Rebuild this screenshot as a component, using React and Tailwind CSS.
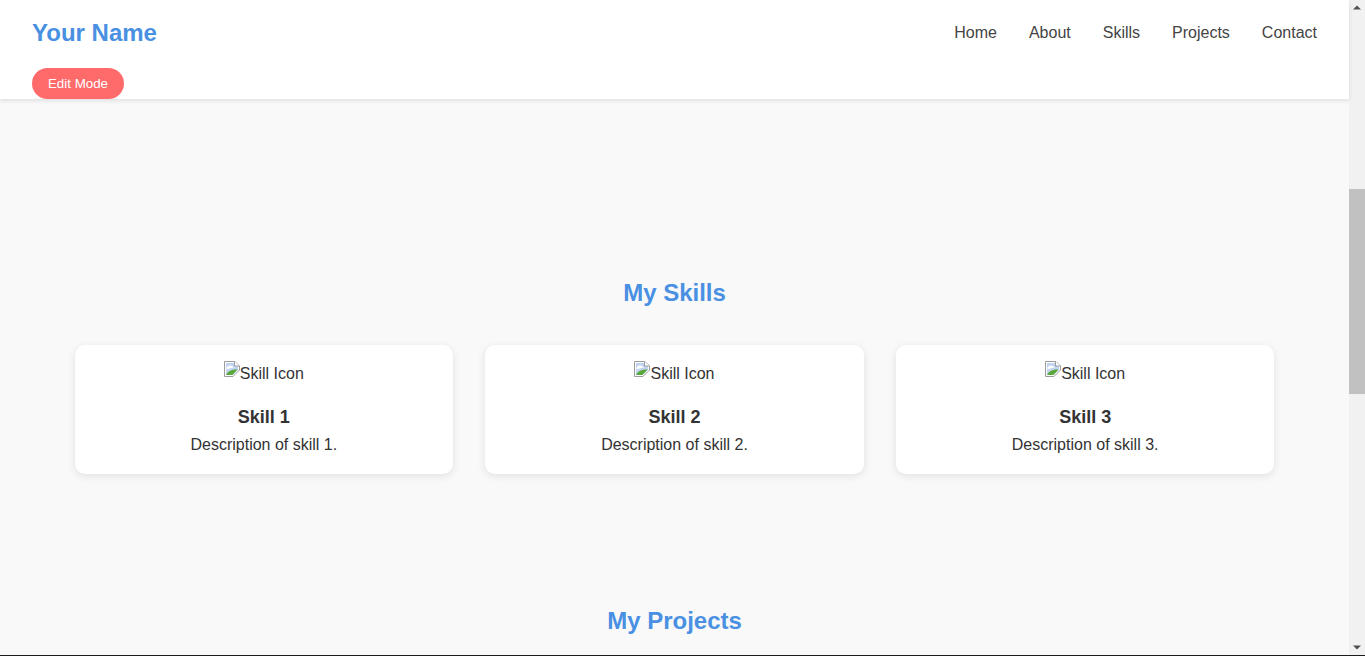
import React from "react";

const FONT = { fontFamily: '"Liberation Sans", Arial, sans-serif' };
const LINKS = ["Home", "About", "Skills", "Projects", "Contact"];
const SKILLS = [1, 2, 3];

function BrokenImage() {
  return (
    <svg width="16" height="16" viewBox="0 0 16 16" className="inline-block align-top">
      <path d="M0.5 0.5H11L15.5 5V9L9 15.5H0.5Z" fill="#fff" stroke="#9c9c9c" />
      <path d="M2 2H10.5L14 5.5V9L8.5 14H2Z" fill="#c0d3f0" />
      <path d="M2.5 6.5C4 4 7 3.5 10 6.5C7.5 7 5 7.5 2.5 8.5Z" fill="#fff" />
      <path d="M2 14C3.5 10.5 7.5 8 13.5 8.5L8.5 14Z" fill="#5aa83c" />
      <path d="M10.5 0.5V5H15.5" fill="#fff" stroke="#9c9c9c" />
    </svg>
  );
}

function SkillCard({ n }) {
  return (
    <div className="bg-white rounded-[10px] p-4 text-center shadow-[0_2px_8px_rgba(0,0,0,0.1)] text-[#333]">
      <div className="h-[37px] leading-[25px] text-base">
        <BrokenImage />
        <span>Skill Icon</span>
      </div>
      <h3 className="text-[18px] font-bold leading-[27px] mt-[6px]">Skill {n}</h3>
      <p className="text-base leading-[26px] mt-[1px]">Description of skill {n}.</p>
    </div>
  );
}

export default function App() {
  return (
    <div className="h-[656px] overflow-hidden flex flex-col bg-[#f9f9f9]" style={FONT}>
      <div className="flex h-[655px]">
        <div className="flex-1 min-w-0">
          {/* Header */}
          <header className="bg-white h-[99px] px-8 pt-[16px] shadow-[0_2px_4px_rgba(0,0,0,0.1)] relative">
            <div className="flex items-center justify-between h-[34px]">
              <div className="text-2xl font-bold text-[#4a90e2]">Your Name</div>
              <nav className="flex gap-8 text-base text-[#444]">
                {LINKS.map(l => <a key={l}>{l}</a>)}
              </nav>
            </div>
            <button className="mt-[18px] h-[31px] w-[92px] rounded-full bg-[#ff6b6b] text-white text-[13.33px] block">Edit Mode</button>
          </header>

          {/* Skills */}
          <section className="pt-[176px]">
            <h2 className="text-2xl font-bold text-[#4a90e2] text-center leading-9">My Skills</h2>
            <div className="max-w-[1200px] mx-auto grid grid-cols-3 gap-8 mt-[34px]">
              {SKILLS.map(n => <SkillCard key={n} n={n} />)}
            </div>
          </section>

          {/* Projects */}
          <section className="pt-[129px]">
            <h2 className="text-2xl font-bold text-[#4a90e2] text-center leading-9">My Projects</h2>
          </section>
        </div>

        {/* Scrollbar */}
        <div className="w-4 shrink-0 bg-[#f1f1f1] flex flex-col items-center">
          <svg width="16" height="17" viewBox="0 0 16 17" className="shrink-0"><path d="M4 9.5L8 5.5L12 9.5Z" fill="#505050" /></svg>
          <div className="h-[172px] shrink-0" />
          <div className="w-full h-[205px] bg-[#c1c1c1] shrink-0" />
          <div className="flex-1" />
          <svg width="16" height="17" viewBox="0 0 16 17" className="shrink-0"><path d="M4 7.5L8 11.5L12 7.5Z" fill="#505050" /></svg>
        </div>
      </div>
      <div className="h-px bg-[#1c1c1c]" />
    </div>
  );
}
